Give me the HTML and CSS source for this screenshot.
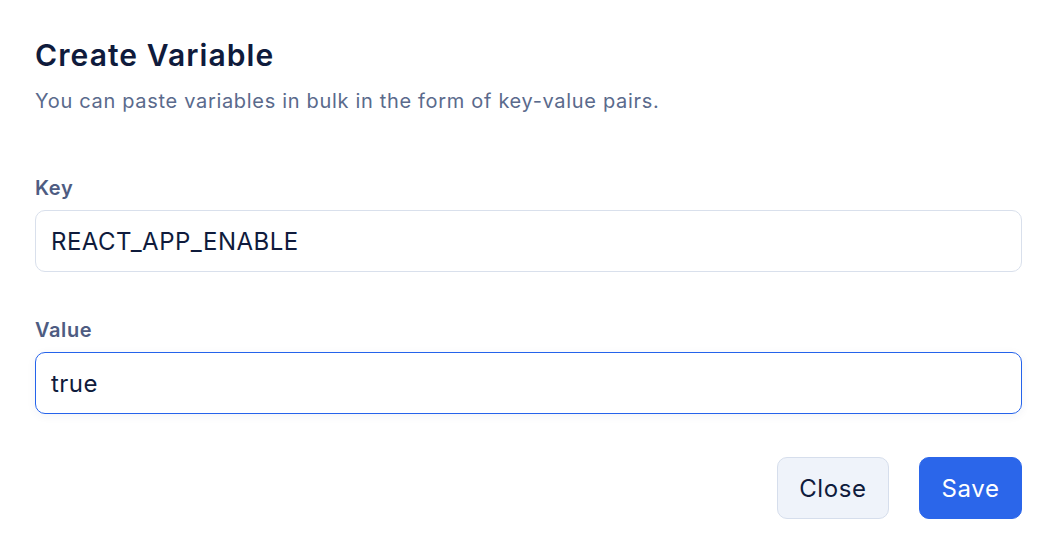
FILE: index.html
```html
<!DOCTYPE html>
<html>
<head>
<meta charset="utf-8">
<link rel="stylesheet" href="styles.css">
</head>
<body>
<div class="dialog">
  <h1 class="title">Create Variable</h1>
  <p class="subtitle">You can paste variables in bulk in the form of key-value pairs.</p>
  <div class="field field-first">
    <label class="label">Key</label>
    <div class="input">REACT_APP_ENABLE</div>
  </div>
  <div class="field">
    <label class="label">Value</label>
    <div class="input input-focus">true</div>
  </div>
  <div class="actions">
    <button class="btn btn-secondary">Close</button>
    <button class="btn btn-primary">Save</button>
  </div>
</div>
</body>
</html>
```
FILE: styles.css
```css
* { box-sizing: border-box; }
html, body { margin: 0; padding: 0; background: #ffffff; }
body { font-family: Inter, "Noto Sans", sans-serif; }
.dialog {
  padding: 37px 32px 0 35px;
  display: flex;
  flex-direction: column;
}
.title {
  margin: 0;
  font-size: 30px;
  line-height: 36px;
  font-weight: 600;
  letter-spacing: 0.036em;
  color: #0f1b3c;
}
.subtitle {
  margin: 12px 0 0;
  font-size: 20px;
  line-height: 32px;
  letter-spacing: 0.034em;
  color: #5a6a8c;
}
.field {
  display: flex;
  flex-direction: column;
  gap: 6px;
  margin-top: 42px;
}
.field-first { margin-top: 55px; }
.label {
  font-size: 20px;
  line-height: 32px;
  font-weight: 600;
  letter-spacing: 0.03em;
  color: #4e5c82;
}
.input {
  height: 62px;
  border: 1px solid #d9e0ec;
  border-radius: 10px;
  padding: 0 15px;
  display: flex;
  align-items: center;
  font-size: 24px;
  letter-spacing: 0.02em;
  color: #0f1b3c;
}
.input-focus {
  border-color: #2563eb;
  box-shadow: 0 2px 10px rgba(30, 50, 100, 0.06);
}
.actions {
  display: flex;
  justify-content: flex-end;
  gap: 30px;
  margin-top: 43px;
}
.btn {
  height: 62px;
  border-radius: 10px;
  font-family: Inter, "Noto Sans", sans-serif;
  font-size: 24px;
  letter-spacing: 0.025em;
  padding: 0 21.5px;
}
.btn-secondary {
  background: #eff3fa;
  border: 1px solid #d6deec;
  color: #0f1b3c;
}
.btn-primary {
  background: #2b66ea;
  border: 1px solid #2b66ea;
  color: #ffffff;
}
```
